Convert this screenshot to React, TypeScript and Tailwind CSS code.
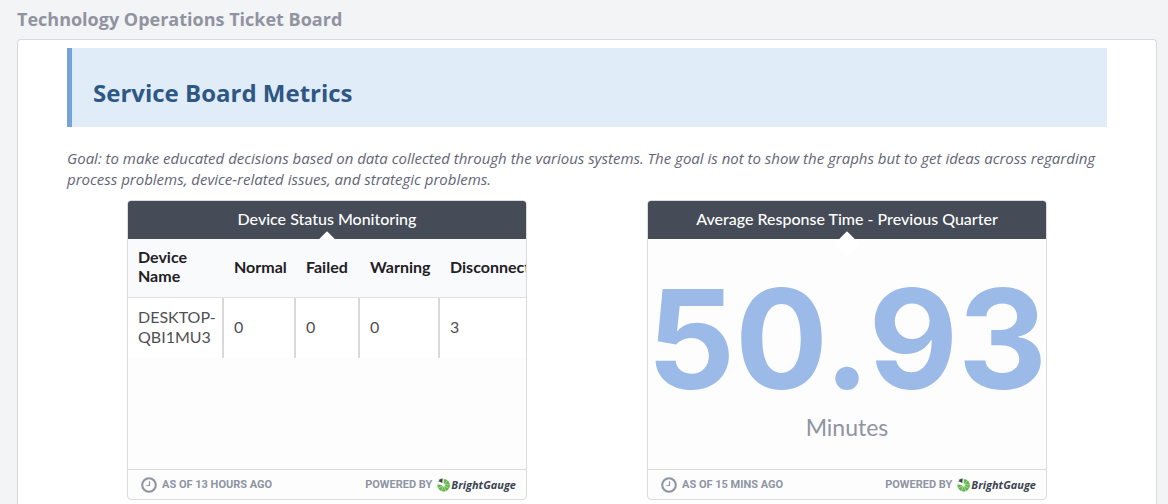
import type { ReactNode } from "react";

const statusColumns = [
  { label: "Device Name", width: "w-24" },
  { label: "Normal", width: "w-18" },
  { label: "Failed", width: "w-16" },
  { label: "Warning", width: "w-20" },
  { label: "Disconnected", width: "w-32" },
];

const devices = [{ name: "DESKTOP-QBI1MU3", counts: [0, 0, 0, 3] }];

function ClockIcon() {
  return (
    <svg viewBox="0 0 16 16" className="size-4" fill="none" stroke="currentColor" aria-hidden="true">
      <circle cx="8" cy="8" r="6.8" strokeWidth="2.1" />
      <path d="M8.5 4.3V8.5H5.4" strokeWidth="1.2" />
    </svg>
  );
}

function GaugeMark() {
  const spokes = [0, 40, 80, 120, 160, 200, 240, 280];
  return (
    <svg viewBox="0 0 14 14" className="h-3.5 w-3.5" aria-hidden="true">
      <path d="M6.6 1A6.3 6.3 0 1 1 .5 6.2L6.6 7.2Z" fill="#62b54b" />
      <path d="M5.4 5L1.4 3.3A6.6 6.6 0 0 1 5.6 .3Z" fill="#3c4350" />
      {spokes.map((angle) => (
        <path
          key={angle}
          d="M6.6 7.2V.8"
          transform={`rotate(${angle} 6.6 7.2)`}
          stroke="#e6f5df"
          strokeWidth=".5"
        />
      ))}
      <circle cx="6.6" cy="7.2" r="1.3" fill="#f4faf1" />
    </svg>
  );
}

function Card({ title, age, children }: { title: string; age: string; children: ReactNode }) {
  return (
    <section className="flex w-full max-w-100 flex-col overflow-hidden rounded-[4px] border border-[#d9dcdf] bg-[#fdfdfd] font-['Lato',sans-serif]">
      <header className="relative flex h-[38px] items-center justify-center bg-[#454b57] pb-0.5">
        <h2 className="text-[16px] leading-5 font-medium text-white">{title}</h2>
        <span className="absolute top-[34px] left-1/2 size-[18px] -translate-x-1/2 rotate-45 bg-white" />
      </header>
      <div className="relative h-[230px]">{children}</div>
      <footer className="flex h-[30px] items-center justify-between border-t border-[#d9dcdf] pr-2.5 pl-[13px] font-['Roboto',sans-serif] text-[11px] leading-4 font-bold text-[#8f94a3]">
        <span className="flex items-center gap-[5px]">
          <ClockIcon />
          {age}
        </span>
        <span className="flex items-center gap-[5px]">
          POWERED BY
          <span className="flex items-center">
            <GaugeMark />
            <span className="font-['Open_Sans',sans-serif] text-[11px] text-[#3c4350] italic">BrightGauge</span>
          </span>
        </span>
      </footer>
    </section>
  );
}

function StatusTable() {
  return (
    <table className="w-110 table-fixed border-separate border-spacing-0 text-left text-[16px]">
      <thead className="bg-[#f9fafc] text-[#1f2024]">
        <tr>
          {statusColumns.map((column) => (
            <th
              key={column.label}
              scope="col"
              className={`h-[59px] border-b border-[#dfe1e3] px-2.5 pt-0 pb-1 leading-[19px] font-bold ${column.width}`}
            >
              {column.label}
            </th>
          ))}
        </tr>
      </thead>
      <tbody className="bg-white text-[#505052]">
        {devices.map((device) => (
          <tr key={device.name}>
            <td className="h-[60px] border-r-2 border-[#d8d9da] pt-0 pr-0 pb-0.5 pl-2.5 leading-5">{device.name}</td>
            {device.counts.map((count, index) => (
              <td key={index} className="h-[60px] border-r-2 border-[#d8d9da] px-2.5 pt-0 pb-0.5 leading-5">
                {count}
              </td>
            ))}
          </tr>
        ))}
      </tbody>
    </table>
  );
}

export default function App() {
  return (
    <div className="flex min-h-screen flex-col bg-[#f3f4f6] pr-[11px] pl-[17px] font-['Open_Sans',sans-serif]">
      <h1 className="pt-[7px] pb-2 text-[18px] leading-6 font-bold text-[#9193a1]">
        Technology Operations Ticket Board
      </h1>
      <main className="flex-1 rounded-t-[4px] border border-b-0 border-[#d5dade] bg-white px-[49px] pt-2">
        <div className="border-l-5 border-[#74a3d7] bg-[#e0ecf8] pt-7 pr-5 pb-[18px] pl-[21px]">
          <h2 className="text-[24px] leading-[33px] font-bold text-[#2f5784]">Service Board Metrics</h2>
        </div>
        <p className="mt-[21px] text-[15px] leading-[21px] text-[#636575] italic">
          Goal: to make educated decisions based on data collected through the various systems. The goal is not to show
          the graphs but to get ideas across regarding process problems, device-related issues, and strategic problems.
        </p>
        <div className="mt-[10px] grid grid-cols-2 justify-items-center">
          <Card title="Device Status Monitoring" age="AS OF 13 HOURS AGO">
            <StatusTable />
          </Card>
          <Card title="Average Response Time - Previous Quarter" age="AS OF 15 MINS AGO">
            <div className="flex h-full flex-col items-center pt-[26px]">
              <div className="font-['Inter',sans-serif] text-[138px] leading-[148px] font-bold text-[#9bbae8]">
                50.93
              </div>
              <div className="text-[23px] leading-7 text-[#8f94a3]">Minutes</div>
            </div>
          </Card>
        </div>
      </main>
    </div>
  );
}
